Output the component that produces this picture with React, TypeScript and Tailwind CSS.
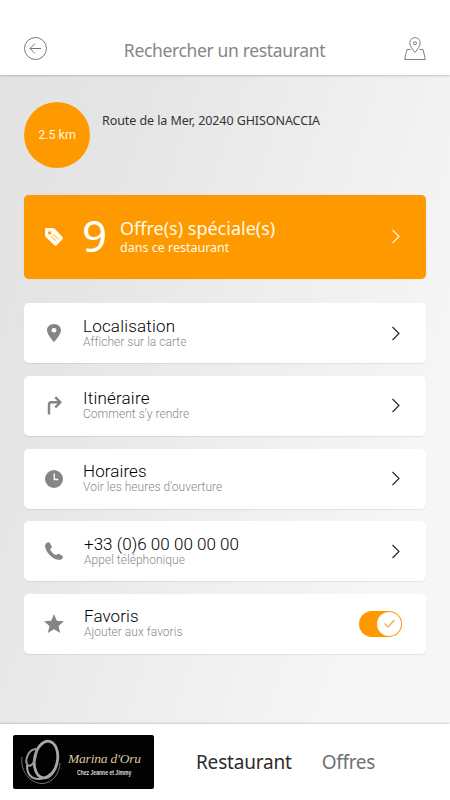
import type { ReactNode } from 'react';

const icons = {
  pin: (
    <svg className="h-[18px] w-[14px]" viewBox="5 2 14 20" preserveAspectRatio="none" fill="currentColor">
      <path d="M12 2C8.13 2 5 5.13 5 9c0 5.25 7 13 7 13s7-7.75 7-13c0-3.87-3.13-7-7-7zm0 9.5a2.5 2.5 0 1 1 0-5 2.5 2.5 0 0 1 0 5z" />
    </svg>
  ),
  route: (
    <svg className="h-[19px] w-[15px]" viewBox="0 0 15 19" fill="none" stroke="currentColor" strokeWidth="2.4">
      <path d="M2 18.5V8.6Q2 6.3 4.300 6.3H13M8.300 1.200L13.300 6.3L8.300 11.400" />
    </svg>
  ),
  clock: (
    <svg className="h-[18px] w-[18px]" viewBox="0 0 18 18">
      <circle cx="9" cy="9" r="9" fill="currentColor" />
      <path d="M9.300 3.500V9.500H13.300" fill="none" stroke="white" strokeWidth="1.300" />
    </svg>
  ),
  phone: (
    <svg className="h-[18px] w-[18px]" viewBox="0 0 18 18" fill="currentColor">
      <path d="M1.600.9C2.800.1 4.100-.1 4.700.8L6.700 4.200C7.200 5.200 6.700 6 5.700 6.500C5.200 6.800 5.100 7.300 5.400 7.900C6.500 10 8.300 11.900 10.600 12.900C11.200 13.200 11.500 13 11.900 12.500C12.600 11.600 13.300 11.500 14.200 12L17.200 13.700C18 14.200 18.100 15 17.600 15.900C16.600 17.600 14.500 18.300 12.100 17.600C6.800 16 2.200 11.600.5 6.200C-.3 3.800.1 1.900 1.600.9Z" />
    </svg>
  ),
  star: (
    <svg className="h-[19px] w-[20px]" viewBox="2 2 20 19" fill="currentColor">
      <path d="M12 17.270L18.180 21L16.540 13.970L22 9.240L14.810 8.630L12 2L9.190 8.630L2 9.240L7.460 13.970L5.820 21Z" />
    </svg>
  ),
};

const ROWS: { id: string; icon: ReactNode; title: string; subtitle: string; indent?: string; tracking: string }[] = [
  { id: 'map', icon: icons.pin, title: 'Localisation', subtitle: 'Afficher sur la carte', tracking: 'tracking-[0.2px]' },
  { id: 'route', icon: icons.route, title: 'Itinéraire', subtitle: "Comment s'y rendre", tracking: 'tracking-[0.2px]' },
  { id: 'hours', icon: icons.clock, title: 'Horaires', subtitle: "Voir les heures d'ouverture", tracking: 'tracking-[0.100px]' },
  { id: 'call', icon: icons.phone, title: '+33 (0)6 00 00 00 00', subtitle: 'Appel téléphonique', indent: 'pl-px', tracking: 'tracking-[0.030px]' },
  { id: 'fav', icon: icons.star, title: 'Favoris', subtitle: 'Ajouter aux favoris', indent: 'pl-px', tracking: 'tracking-[0.100px]' },
];

function Chevron({ className }: { className: string }) {
  return (
    <svg className={`h-[15px] w-[9px] ${className}`} viewBox="0 0 9 15" fill="none" stroke="currentColor" strokeWidth="1.100">
      <path d="M1.500 1L8 7.500L1.500 14" />
    </svg>
  );
}

function Toggle() {
  return (
    <div className="flex h-[26px] w-[43px] items-center justify-end rounded-full bg-[#ff9900] p-px">
      <div className="flex h-6 w-6 items-center justify-center rounded-full bg-white">
        <svg className="h-[9px] w-[11px] text-[#f5a52e]" viewBox="0 0 11 9" fill="none" stroke="currentColor" strokeWidth="1.200">
          <path d="M.5 4.500L4 8L10.500 1" />
        </svg>
      </div>
    </div>
  );
}

export default function App() {
  return (
    <div className="flex h-[800px] w-[450px] flex-col overflow-hidden bg-white font-['Noto_Sans',sans-serif]">
      {/* Header */}
      <header className="z-10 flex h-[75px] shrink-0 items-start justify-between bg-white pr-6 pl-6 shadow-[0_1px_2px_rgba(0,0,0,0.2)]">
        <svg className="mt-[37px] h-[23px] w-[23px]" viewBox="0 0 23 23" fill="none" stroke="#777" strokeWidth="1">
          <circle cx="11.500" cy="11.500" r="11" />
          <path d="M17 11.500H6M11 6.500L6 11.500L11 16.500" />
        </svg>
        <h1 className="mt-[38px] -ml-0.5 text-[17.5px] leading-6 font-normal tracking-[-0.35px] whitespace-nowrap text-[#868686]">Rechercher un restaurant</h1>
        <svg className="mt-[37px] h-[23px] w-[22px]" viewBox="0 0 22 23" fill="none" stroke="#808080" strokeWidth="1">
          <path d="M6.500 12.500H3L.6 22.500H21.400L19 12.500H15.500" />
          <path d="M11 15.500C8.200 11.800 5.800 9 5.800 5.800a5.200 5.200 0 0 1 10.400 0C16.200 9 13.800 11.800 11 15.500Z" />
          <circle cx="11" cy="6.200" r="1.500" />
        </svg>
      </header>

      <main className="flex-1 bg-linear-[108deg,#e3e3e3_0%,#e5e5e5_20%,#eeeeee_52%,#f6f6f6_82%,#f7f7f7_100%] px-6 pt-[27px]">
        {/* Distance and address */}
        <div className="flex h-[66px]">
          <div className="flex h-[66px] w-[66px] items-center justify-center rounded-full bg-[#ff9900] pt-px font-['Roboto',sans-serif] text-[12.5px] text-[#fff6dc]">
            2.5 km
          </div>
          <p className="mt-[10px] ml-3 text-[12.5px] leading-[18px] tracking-[-0.08px] whitespace-nowrap text-[#333]">Route de la Mer, 20240 GHISONACCIA</p>
        </div>

        {/* Special offers */}
        <div className="mt-[27px] flex h-[84px] items-center rounded-[5px] bg-[#ff9900] pr-[26px] pl-[21px] text-[#fffbe8] shadow-[0_0_1px_rgba(0,0,0,0.2)]">
          <svg className="h-[18px] w-[18px]" viewBox="0 0 18 18" fill="currentColor">
            <path d="M1 0H8Q9 0 9.700.7L17.300 8.800Q18.500 10 17.400 11.200L11.700 17.200Q10.500 18.400 9.300 17.200L.8 9Q0 8.300 0 7V1Q0 0 1 0Z" />
            <circle cx="4.600" cy="4.800" r="1.600" fill="#ff9900" />
            <path d="M6.200 8.500L11.300 13M8.600 6.600L13.500 11.200" fill="none" stroke="#ff9900" strokeWidth=".8" />
          </svg>
          <span className="-mt-1 ml-[19px] w-[38px] text-[44px] leading-[50px] text-white">9</span>
          <div className="-mt-px whitespace-nowrap">
            <p className="text-[18px] leading-[22px]">Offre(s) spéciale(s)</p>
            <p className="text-[12.5px] leading-[17px]">dans ce restaurant</p>
          </div>
          <Chevron className="-mt-px ml-auto" />
        </div>

        {/* Actions */}
        <div className="mt-[24.400px] flex flex-col gap-[12.600px] font-['Roboto',sans-serif]">
          {ROWS.map(row => (
            <div key={row.id} className="flex h-[60px] items-center rounded-[5px] bg-white pr-[26px] pl-5 shadow-[0_1px_1px_rgba(0,0,0,0.08)]">
              <span className="flex w-5 justify-center text-[#858585]">{row.icon}</span>
              <div className={`ml-[19px] pb-px whitespace-nowrap ${row.indent ?? ''}`}>
                <p className={`text-[17px] leading-[18px] font-light text-black ${row.tracking}`}>{row.title}</p>
                <p className="text-[12px] leading-[14px] font-light tracking-[0.030px] text-[#8a8a8a]">{row.subtitle}</p>
              </div>
              {row.id === 'fav' ? (
                <div className="-mr-0.5 ml-auto"><Toggle /></div>
              ) : (
                <Chevron className="ml-auto text-[#222]" />
              )}
            </div>
          ))}
        </div>
      </main>

      {/* Bottom bar */}
      <footer className="z-10 flex h-[76px] shrink-0 items-center bg-white pl-[13px] shadow-[0_-1px_2px_rgba(0,0,0,0.15)]">
        <div className="flex h-[54px] w-[141px] items-center rounded-[2px] bg-[#030202]">
          <svg className="ml-2 h-[46px] w-[41px]" viewBox="0 0 41 46" fill="none">
            <ellipse cx="25" cy="20.500" rx="11.500" ry="18.500" transform="rotate(10 25 20.500)" stroke="#aaa5a7" strokeWidth="2.800" />
            <path d="M15.500 10C7 10 3 22 7 26.500C12 28 15.500 20 15.500 10Z" stroke="#9b9799" strokeWidth="2" />
            <path d="M6 26C6 36 11 40 18 40C23 40 27 38 30 34" stroke="#aaa5a7" strokeWidth="2" />
            <path d="M1 18C-1 32 9 44.500 21 44.500C32 44.500 38.500 34 39 24" stroke="#79716e" strokeWidth="1" />
          </svg>
          <div className="ml-[6px] pt-[5px] whitespace-nowrap">
            <p className="font-['Liberation_Serif',serif] text-[13.5px] leading-[15px] tracking-[-0.200px] text-[#d9c89a] italic">Marina d&apos;Oru</p>
            <p className="ml-[9px] origin-left scale-x-[0.78] font-['Liberation_Sans',sans-serif] text-[6.500px] leading-[13px] font-bold text-[#ddd]">Chez Jeanne et Jimmy</p>
          </div>
        </div>
        <nav className="ml-[42px] flex gap-[30px] text-[19px] leading-6 tracking-[-0.200px] whitespace-nowrap">
          <span className="text-[#2c2c2c]">Restaurant</span>
          <span className="tracking-[-0.300px] text-[#707070]">Offres</span>
        </nav>
      </footer>
    </div>
  );
}
